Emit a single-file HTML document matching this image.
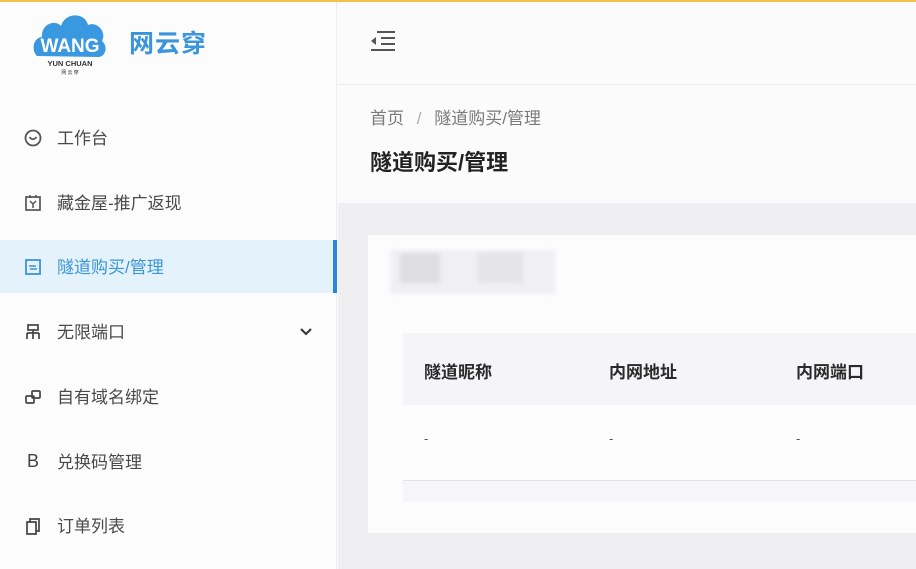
<!DOCTYPE html>
<html><head><meta charset="utf-8"><style>
*{margin:0;padding:0;box-sizing:border-box}
body{width:916px;height:569px;overflow:hidden;background:#fafafb;font-family:"Liberation Sans","Noto Sans CJK SC",sans-serif;position:relative}
.top{position:absolute;left:0;top:0;width:916px;height:2px;background:#f3c24a}
.side{position:absolute;left:0;top:2px;width:337px;height:567px;background:#fcfcfd;border-right:1px solid #eeeef0}
.item{position:absolute;left:0;width:337px;height:53px;display:flex;align-items:center;font-size:17px;color:#4a4a4a}
.item .ic{position:absolute;left:24px;width:18px;height:18px;display:flex;align-items:center;justify-content:center}
.item .t{position:absolute;left:57px;top:13px}
.active{background:#e4f2fb;color:#3a95da}
.active:after{content:"";position:absolute;right:0;top:0;width:4px;height:53px;background:#2a86dc}
.hdr{position:absolute;left:338px;top:2px;width:578px;height:83px;background:#fbfbfc;border-bottom:1px solid #ececee}
.bc{position:absolute;left:338px;top:86px;width:578px;height:117px;background:#fbfbfc}
.main{position:absolute;left:338px;top:203px;width:578px;height:366px;background:#efeff1}
.card{position:absolute;left:368px;top:235px;width:548px;height:298px;background:#fcfcfd}
</style></head><body>
<div class="top"></div>
<div class="side">
  <svg style="position:absolute;left:33px;top:8px" width="74" height="66" viewBox="0 0 74 66">
    <path d="M4 46 C-2 40 0 28 9 27 C8 14 22 9 28 16 C32 2 52 2 55 15 C64 11 74 22 69 31 C75 36 73 46 66 47 Z" fill="#3a98e0"/>
    <text x="37" y="42" text-anchor="middle" font-family="Liberation Sans" font-weight="bold" font-size="19" fill="#fff">WANG</text>
    <text x="37" y="56" text-anchor="middle" font-family="Liberation Sans" font-weight="bold" font-size="7.5" fill="#333">YUN CHUAN</text>
    <text x="37" y="64" text-anchor="middle" font-family="Noto Sans CJK SC" font-size="5" fill="#333">网 云 穿</text>
  </svg>
  <div style="position:absolute;left:129px;top:22px;font-size:25px;font-weight:bold;color:#3a95da;letter-spacing:1px">网云穿</div>
  <div class="item" style="top:109px"><div class="ic"><svg width="18" height="18"><circle cx="9" cy="9" r="7.5" fill="none" stroke="#555" stroke-width="1.8"/><path d="M5.5 8 Q9 12.5 12.5 8" fill="none" stroke="#555" stroke-width="1.8"/></svg></div><span class="t">工作台</span></div>
  <div class="item" style="top:174px"><div class="ic"><svg width="18" height="18"><rect x="2" y="3" width="14" height="13" fill="none" stroke="#555" stroke-width="1.7"/><path d="M6 1v3M12 1v3M6 7l3 3 3-3M9 10v4" fill="none" stroke="#555" stroke-width="1.5"/></svg></div><span class="t">藏金屋-推广返现</span></div>
  <div class="item active" style="top:238px"><div class="ic"><svg width="18" height="18"><rect x="2" y="2" width="14" height="14" fill="none" stroke="#3a95da" stroke-width="1.8"/><path d="M5 8h7M6 11h7" stroke="#3a95da" stroke-width="1.5"/></svg></div><span class="t">隧道购买/管理</span></div>
  <div class="item" style="top:303px"><div class="ic"><svg width="18" height="18"><rect x="4" y="2" width="10" height="5" fill="none" stroke="#444" stroke-width="1.7"/><path d="M9 7v3M3 10h12M3 10v6M9 10v6M15 10v6" stroke="#444" stroke-width="1.7" fill="none"/></svg></div><span class="t">无限端口</span><svg style="position:absolute;left:300px;top:23px" width="12" height="8"><path d="M1 1l5 5 5-5" fill="none" stroke="#333" stroke-width="2"/></svg></div>
  <div class="item" style="top:368px"><div class="ic"><svg width="18" height="18"><rect x="2" y="8" width="8" height="7" rx="1" fill="none" stroke="#444" stroke-width="1.7"/><rect x="8" y="3" width="8" height="7" rx="1" fill="none" stroke="#444" stroke-width="1.7"/></svg></div><span class="t">自有域名绑定</span></div>
  <div class="item" style="top:433px"><div class="ic" style="font-size:18px;color:#444">B</div><span class="t">兑换码管理</span></div>
  <div class="item" style="top:497px"><div class="ic"><svg width="18" height="18"><path d="M3 5h9v12H3zM6 5V2h9v12h-3" fill="none" stroke="#444" stroke-width="1.7"/></svg></div><span class="t">订单列表</span></div>
</div>
<div class="hdr">
  <svg style="position:absolute;left:33px;top:28px" width="24" height="22"><path d="M6 2h18M10 8h14M10 14h14M0 20h24" stroke="#555" stroke-width="2"/><path d="M0 11l5-4v8z" fill="#555"/></svg>
</div>
<div class="bc">
  <div style="position:absolute;left:32px;top:18px;font-size:17px;color:#7a7a7a">首页 <span style="margin:0 8px;color:#aab">/</span> 隧道购买/管理</div>
  <div style="position:absolute;left:32px;top:59px;font-size:22px;font-weight:bold;color:#222">隧道购买/管理</div>
</div>
<div class="main"></div>
<div class="card">
  <div style="position:absolute;left:22px;top:15px;width:165px;height:44px;background:#f0f0f2;filter:blur(2px)"></div>
  <div style="position:absolute;left:32px;top:18px;width:40px;height:30px;background:#dedee1;filter:blur(2px)"></div>
  <div style="position:absolute;left:110px;top:18px;width:45px;height:30px;background:#e4e4e7;filter:blur(2px)"></div>
  <div style="position:absolute;left:35px;top:98px;width:513px;height:72px;background:#f5f5f7"></div>
  <div style="position:absolute;left:35px;top:245px;width:513px;height:22px;background:#f6f6f8;border-top:1px solid #e2e2e5"></div>
  <div style="position:absolute;left:56px;top:123px;font-size:17px;font-weight:bold;color:#2a2a2a">隧道昵称</div>
  <div style="position:absolute;left:241px;top:123px;font-size:17px;font-weight:bold;color:#2a2a2a">内网地址</div>
  <div style="position:absolute;left:428px;top:123px;font-size:17px;font-weight:bold;color:#2a2a2a">内网端口</div>
  <div style="position:absolute;left:56px;top:196px;font-size:13px;color:#555">-</div>
  <div style="position:absolute;left:241px;top:196px;font-size:13px;color:#555">-</div>
  <div style="position:absolute;left:428px;top:196px;font-size:13px;color:#555">-</div>
</div>
</body></html>
